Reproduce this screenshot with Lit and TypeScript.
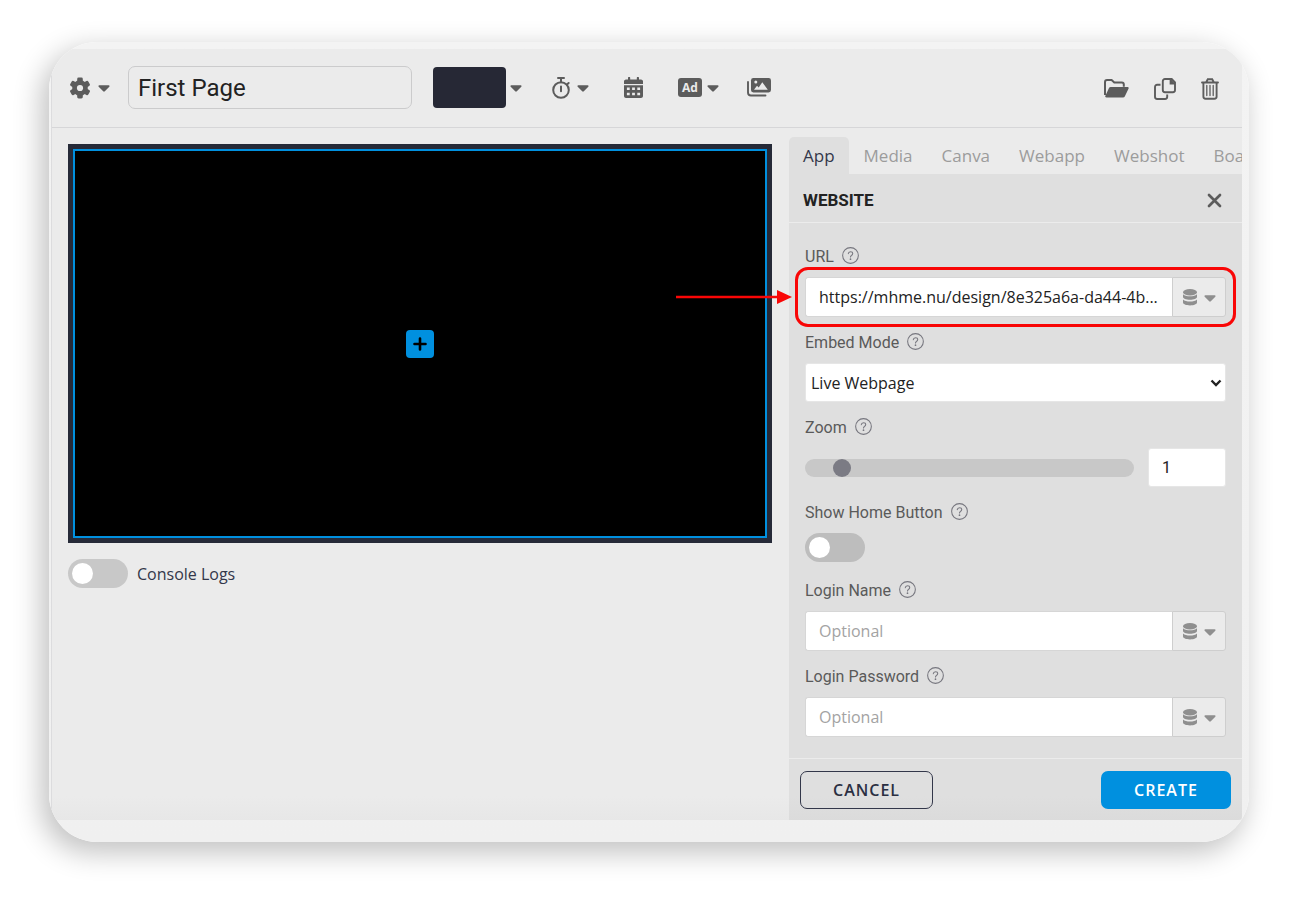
import { LitElement, html, css, svg } from "lit";
import { customElement, property } from "lit/decorators.js";

const caret = html`<svg class="caret" viewBox="0 0 12 7" aria-hidden="true">
  <path d="M1.3.3h9.4c.8 0 1.2.9.6 1.5L6.8 6.3c-.5.5-1.1.5-1.6 0L.7 1.8C.1 1.2.5.3 1.3.3z" />
</svg>`;

const help = html`<svg class="help" viewBox="0 0 16 16" aria-hidden="true">
  <circle cx="8" cy="8" r="7.4" fill="none" stroke="#77777f" stroke-width="1" />
  <path d="M5.9 6.3c.1-1.2.9-1.9 2.1-1.9s2.1.7 2.1 1.8c0 .9-.5 1.3-1.2 1.8-.6.4-.9.7-.9 1.4" fill="none" stroke="#77777f" stroke-width="1" stroke-linecap="round" />
  <circle cx="8" cy="11.5" r=".8" fill="#77777f" />
</svg>`;

const teeth = [0, 60, 120].map(
  (a) => svg`<rect x="7.2" y="-.4" width="5.6" height="20.8" rx="1.4" transform="rotate(${a} 10 10)" />`
);

const gear = html`<svg width="20" height="22" viewBox="0 -1 20 22" aria-hidden="true">
  <mask id="hub"><rect y="-1" width="20" height="22" fill="#fff" /><circle cx="10" cy="10" r="3.1" fill="#000" /></mask>
  <g mask="url(#hub)" fill="#5c5c5c">${teeth}<circle cx="10" cy="10" r="7.8" /></g>
</svg>`;

const stopwatch = html`<svg width="18" height="22" viewBox="0 0 18 22" fill="none" stroke="#5c5c5c" aria-hidden="true">
  <circle cx="9" cy="13" r="7.8" stroke-width="2" />
  <path d="M9 9.6v4.6M9 1.2v4M15 7.6l1.6-1.6" stroke-width="2" stroke-linecap="round" />
  <path d="M6 1h6" stroke-width="2" stroke-linecap="round" />
</svg>`;

const calendar = html`<svg width="19" height="21" viewBox="0 0 19 21" aria-hidden="true">
  <path fill="#5c5c5c" fill-rule="evenodd" d="M4 1a1.1 1.1 0 0 1 2.2 0v1.6h6.6V1A1.1 1.1 0 0 1 15 1v1.6h2c1.1 0 2 .9 2 2V7H0V4.600c0-1.100.9-2 2-2h2zM0 8.200h19V19c0 1.100-.9 2-2 2H2c-1.100 0-2-.9-2-2zM2.900 10.500v2.500h2.800v-2.500zM8.100 10.500v2.500h2.800v-2.500zM13.300 10.500v2.500h2.800v-2.500zM2.900 15.700v2.500h2.800v-2.500zM8.100 15.700v2.500h2.800v-2.500zM13.300 15.700v2.500h2.800v-2.500z" />
</svg>`;

const images = html`<svg width="24" height="19" viewBox="0 0 24 19" aria-hidden="true">
  <rect x="4" y="0" width="20" height="14.500" rx="2.400" fill="#5c5c5c" />
  <path d="M1 4v10.500c0 1.700 1.300 3 3 3h14.500" fill="none" stroke="#5c5c5c" stroke-width="1.900" stroke-linecap="round" />
  <circle cx="8.800" cy="4" r="1.500" fill="#ebebeb" />
  <path fill="#ebebeb" d="M7 11.800l3-4 1.700 1.800L15.300 4.200l5.500 7.600z" />
</svg>`;

const folder = html`<svg width="25" height="20" viewBox="0 0 25 20" aria-hidden="true">
  <path d="M1 16V3.200C1 2 1.900 1.100 3 1.100h4.600l2.700 2.500h7.500c1.100 0 2 .9 2 2v2.200" fill="none" stroke="#5c5c5c" stroke-width="2" />
  <path fill="#5c5c5c" d="M6.700 7.900h17c.8 0 1.300.8.900 1.500l-3.700 7.900c-.4.8-1 1.200-1.900 1.200H2.500c-1.100 0-1.600-.8-1.100-1.700l3.700-8c.3-.6.900-.9 1.600-.9z" />
</svg>`;

const copy = html`<svg width="22" height="22" viewBox="0 0 22 22" fill="none" stroke="#5c5c5c" stroke-width="1.900" aria-hidden="true">
  <path d="M11 1h6.700L21 4.300V12c0 1.300-.9 2.200-2.200 2.200H11c-1.300 0-2.200-.9-2.200-2.200V3.200C8.800 1.900 9.700 1 11 1z" />
  <path d="M16.600 1v4.600H21" fill="#5c5c5c" />
  <path d="M6.500 6.800H3.200C1.900 6.800 1 7.700 1 9v9.800C1 20.100 1.900 21 3.200 21h7.800c1.300 0 2.200-.9 2.200-2.200v-2.300" />
</svg>`;

const trash = html`<svg width="18" height="22" viewBox="0 0 18 22" fill="none" stroke="#5c5c5c" aria-hidden="true">
  <path d="M1 4.500h16M5.200 4.300L6.800 1.200h4.400l1.600 3.100" stroke-width="1.900" stroke-linecap="round" />
  <path d="M2.400 4.800v13.700c0 1.300.9 2.200 2.200 2.200h8.800c1.300 0 2.200-.9 2.200-2.200V4.800" stroke-width="1.900" />
  <path d="M5.800 7.500v10M9 7.500v10M12.200 7.500v10" stroke-width="1.300" stroke-linecap="round" />
</svg>`;

const database = html`<svg width="14" height="17" viewBox="0 0 14 17" fill="#8f8f8f" aria-hidden="true">
  <ellipse cx="7" cy="3.200" rx="7" ry="3.200" />
  <path d="M0 5.300c1.500 1.400 4 2 7 2s5.500-.6 7-2V8c0 1.500-3 2.800-7 2.800S0 9.500 0 8z" />
  <path d="M0 10.600c1.500 1.400 4 2 7 2s5.500-.6 7-2v2.900c0 1.600-3 2.900-7 2.900s-7-1.300-7-2.900z" />
</svg>`;

const shared = css`
  * { box-sizing: border-box; }
  button, input, select { font: inherit; color: inherit; margin: 0; }
  button { border: 0; padding: 0; background: none; cursor: pointer; }
  svg { display: block; flex: none; }
  .caret { width: 12px; height: 7px; margin-top: 2px; fill: currentColor; }
  .toggle {
    appearance: none; flex: none; width: 60px; height: 29px; padding: 4px;
    border-radius: 15px; background: #bdbdbd; display: flex; align-items: center;
  }
  .toggle::before { content: ""; width: 21px; height: 21px; border-radius: 50%; background: #fff; }
  .toggle:checked { justify-content: flex-end; background: #0090df; }
`;

@customElement("editor-toolbar")
class EditorToolbar extends LitElement {
  static styles = [shared, css`
    :host { display: block; border-bottom: 1px solid #d6d6d8; }
    .bar { display: flex; align-items: center; height: 78px; padding: 0 23px 1px 18px; color: #5c5c5c; }
    .icon { display: flex; align-items: center; gap: 8px; }
    .name {
      width: 284px; height: 43px; margin: 0 21px 0 18px; padding: 0 9px;
      border: 1px solid #cbcbcc; border-radius: 7px; background: transparent;
      font: 24px/32px Roboto, sans-serif; color: #222;
    }
    .color { gap: 4px; margin-right: 30px; }
    .swatch { width: 73px; height: 41px; border-radius: 4px; background: #262835; }
    .tools { display: flex; align-items: center; gap: 35px; flex: 1; }
    .ad { gap: 5px; }
    .badge {
      width: 24px; height: 19px; border-radius: 3px; background: #5c5c5c; color: #ebebeb;
      font: bold 12px/19px "Open Sans", sans-serif; text-align: center;
    }
    .timer { gap: 7px; }
    .actions { display: flex; align-items: center; gap: 25px; padding-top: 2px; }
    .push { margin-left: -7px; }
  `];

  render() {
    return html`<div class="bar">
      <button class="icon" aria-label="Settings">${gear}${caret}</button>
      <input class="name" aria-label="Page name" .value=${"First Page"} />
      <button class="icon color" aria-label="Background"><span class="swatch"></span>${caret}</button>
      <div class="tools">
        <button class="icon timer" aria-label="Duration">${stopwatch}${caret}</button>
        <button class="icon" aria-label="Schedule">${calendar}</button>
        <button class="icon ad"><span class="badge">Ad</span>${caret}</button>
        <button class="icon push" aria-label="Gallery">${images}</button>
      </div>
      <div class="actions">
        <button class="icon" aria-label="Open">${folder}</button>
        <button class="icon" aria-label="Duplicate">${copy}</button>
        <button class="icon" aria-label="Delete">${trash}</button>
      </div>
    </div>`;
  }
}

@customElement("page-preview")
class PagePreview extends LitElement {
  static styles = [shared, css`
    :host { display: block; padding: 16px 17px 16px 16px; }
    .frame { padding: 5px; background: #262a38; aspect-ratio: 704 / 399; display: flex; }
    .stage { flex: 1; border: 2px solid #0090df; background: #000; display: flex; align-items: center; justify-content: center; }
    .add { width: 28px; height: 28px; border-radius: 4px; background: #0090df; display: flex; align-items: center; justify-content: center; }
    .logs { display: flex; align-items: center; gap: 9px; margin-top: 16px; font-size: 16px; line-height: 24px; color: #33374a; }
    .toggle { background: #c8c8c8; }
  `];

  render() {
    return html`
      <div class="frame"><div class="stage">
        <button class="add" aria-label="Add content">
          <svg width="14" height="14" viewBox="0 0 14 14"><path d="M7 1.500v11M1.500 7h11" stroke="#000" stroke-width="2.600" stroke-linecap="round" /></svg>
        </button>
      </div></div>
      <div class="logs"><input class="toggle" type="checkbox" id="logs" /><label for="logs">Console Logs</label></div>`;
  }
}

@customElement("website-panel")
class WebsitePanel extends LitElement {
  @property({ type: Array }) tabs = ["App", "Media", "Canva", "Webapp", "Webshot", "Board"];

  static styles = [shared, css`
    :host { display: flex; flex-direction: column; padding-top: 9px; min-width: 0; }
    .tabs { display: flex; gap: 1px; overflow: hidden; }
    .tab { flex: none; height: 37px; padding: 0 14px; font-size: 17px; line-height: 37px; color: #9c9c9c; border-radius: 5px 5px 0 0; }
    .active { background: #dfdfdf; color: #33374a; }
    .body { flex: 1; display: flex; flex-direction: column; background: linear-gradient(#dfdfdf calc(100% - 24px), #dbdbdb); border-radius: 0 0 4px 0; }
    .title { display: flex; align-items: center; justify-content: space-between; height: 49px; padding: 4px 20px 0 14px; border-bottom: 1px solid #ececec; }
    h2 { margin: 0; font: bold 17px/24px Roboto, sans-serif; color: #222; }
    .form { flex: 1; display: flex; flex-direction: column; gap: 14px; padding: 22px 16px 20px; }
    .field { display: flex; flex-direction: column; gap: 8px; }
    .label { display: flex; align-items: center; gap: 8px; height: 24px; font: 16px/24px Roboto, sans-serif; color: #5a5a5a; }
    .help { width: 17px; height: 17px; margin-bottom: 3px; }
    .group { position: relative; display: flex; height: 40px; }
    .text {
      flex: 1; min-width: 0; height: 40px; padding: 0 13px; background: #fff; color: #222;
      border: 1px solid #d6d6d6; border-right: 0; border-radius: 3px 0 0 3px; font-size: 16px;
    }
    .text::placeholder { color: #a3a3a3; opacity: 1; }
    .source {
      width: 54px; display: flex; align-items: center; justify-content: center; gap: 7px;
      color: #8f8f8f; background: #ebebeb; border: 1px solid #cecece; border-radius: 0 3px 3px 0;
    }
    .select { display: grid; align-items: center; }
    .select > * { grid-area: 1 / 1; }
    .select select {
      appearance: none; height: 39px; padding: 0 5px; background: #fff; color: #222;
      border: 1px solid #e6e6e6; border-radius: 3px; font-size: 16px;
    }
    .chevron { justify-self: end; margin-right: 4px; pointer-events: none; }
    .zoom { display: flex; align-items: center; gap: 14px; height: 39px; }
    .range { appearance: none; flex: 1; min-width: 0; height: 18px; border-radius: 9px; background: #c8c8c8; }
    .range::-webkit-slider-thumb { appearance: none; width: 18px; height: 18px; border-radius: 50%; background: #7b7b84; }
    .amount { width: 78px; height: 39px; padding: 0 13px; border: 1px solid #e6e6e6; border-radius: 3px; background: #fff; color: #222; font: 16px/24px Roboto, sans-serif; }
    .switch { height: 32px; }
    .footer { display: flex; justify-content: space-between; padding: 12px 11px 11px; border-top: 1px solid #ececec; }
    .btn { height: 38px; border-radius: 7px; font-size: 16px; font-weight: 600; letter-spacing: 1px; }
    .cancel { width: 133px; border: 1px solid #33374a; color: #2b2f42; }
    .create { width: 130px; background: #0090df; color: #fff; }
    .highlight { position: absolute; inset: -10px; border: 3px solid #f90606; border-radius: 13px; pointer-events: none; }
    .pointer { position: absolute; right: calc(100% + 13px); top: 13px; }
  `];

  private label(id: string, text: string) {
    return html`<div class="label"><label for=${id}>${text}</label>${help}</div>`;
  }

  private source() {
    return html`<button class="source" aria-label="Data source">${database}${caret}</button>`;
  }

  render() {
    return html`
      <nav class="tabs">${this.tabs.map((t, i) => html`<button class="tab ${i === 0 ? "active" : ""}">${t}</button>`)}</nav>
      <div class="body">
        <div class="title"><h2>WEBSITE</h2>
          <button aria-label="Close"><svg width="15" height="15" viewBox="0 0 15 15"><path d="M2 2l11 11M13 2L2 13" stroke="#5c5c5c" stroke-width="2.700" stroke-linecap="round" /></svg></button>
        </div>
        <div class="form">
          <div class="field">${this.label("url", "URL")}
            <div class="group">
              <input class="text" id="url" .value=${"https://mhme.nu/design/8e325a6a-da44-4b..."} />${this.source()}
              <span class="highlight"></span>
              <svg class="pointer" width="116" height="14" viewBox="0 0 116 14" aria-hidden="true">
                <path d="M0 7h104" stroke="#f90606" stroke-width="2.600" /><path d="M101 0l15 7-15 7z" fill="#f90606" />
              </svg>
            </div>
          </div>
          <div class="field">${this.label("mode", "Embed Mode")}
            <div class="select"><select id="mode"><option>Live Webpage</option></select>
              <svg class="chevron" width="12" height="8" viewBox="0 0 12 8"><path d="M1.500 1.500L6 6l4.500-4.500" fill="none" stroke="#222" stroke-width="2.400" /></svg>
            </div>
          </div>
          <div class="field">${this.label("zoom", "Zoom")}
            <div class="zoom">
              <input class="range" id="zoom" type="range" min="0.1" max="10" step="0.1" value="1" />
              <input class="amount" aria-label="Zoom value" value="1" />
            </div>
          </div>
          <div class="field">${this.label("home", "Show Home Button")}
            <div class="switch"><input class="toggle" type="checkbox" id="home" /></div>
          </div>
          <div class="field">${this.label("login", "Login Name")}
            <div class="group"><input class="text" id="login" placeholder="Optional" />${this.source()}</div>
          </div>
          <div class="field">${this.label("password", "Login Password")}
            <div class="group"><input class="text" id="password" type="password" placeholder="Optional" />${this.source()}</div>
          </div>
        </div>
        <div class="footer"><button class="btn cancel">CANCEL</button><button class="btn create">CREATE</button></div>
      </div>`;
  }
}

@customElement("app-root")
class AppRoot extends LitElement {
  static styles = css`
    :host {
      display: flex; box-sizing: border-box; min-height: 100vh; padding: 42px 51px 58px 49px;
      background: #fff; font-family: "Open Sans", "Noto Sans", sans-serif;
    }
    .card {
      flex: 1; min-width: 0; display: flex; box-sizing: border-box; padding: 7px 7px 22px 2px;
      border-radius: 48px; overflow: hidden; background: linear-gradient(#f3f3f3, #f0f0f0);
      box-shadow: -6px 9px 28px 2px rgba(0, 0, 0, 0.24);
    }
    .window {
      flex: 1; min-width: 0; display: flex; flex-direction: column; border-left: 1px solid #dcdcde;
      background: linear-gradient(#ebebeb calc(100% - 24px), #e7e7e7);
    }
    .columns { flex: 1; display: grid; grid-template-columns: minmax(0, 1fr) 453px; }
  `;

  render() {
    return html`<main class="card"><div class="window">
      <editor-toolbar></editor-toolbar>
      <div class="columns"><page-preview></page-preview><website-panel></website-panel></div>
    </div></main>`;
  }
}
